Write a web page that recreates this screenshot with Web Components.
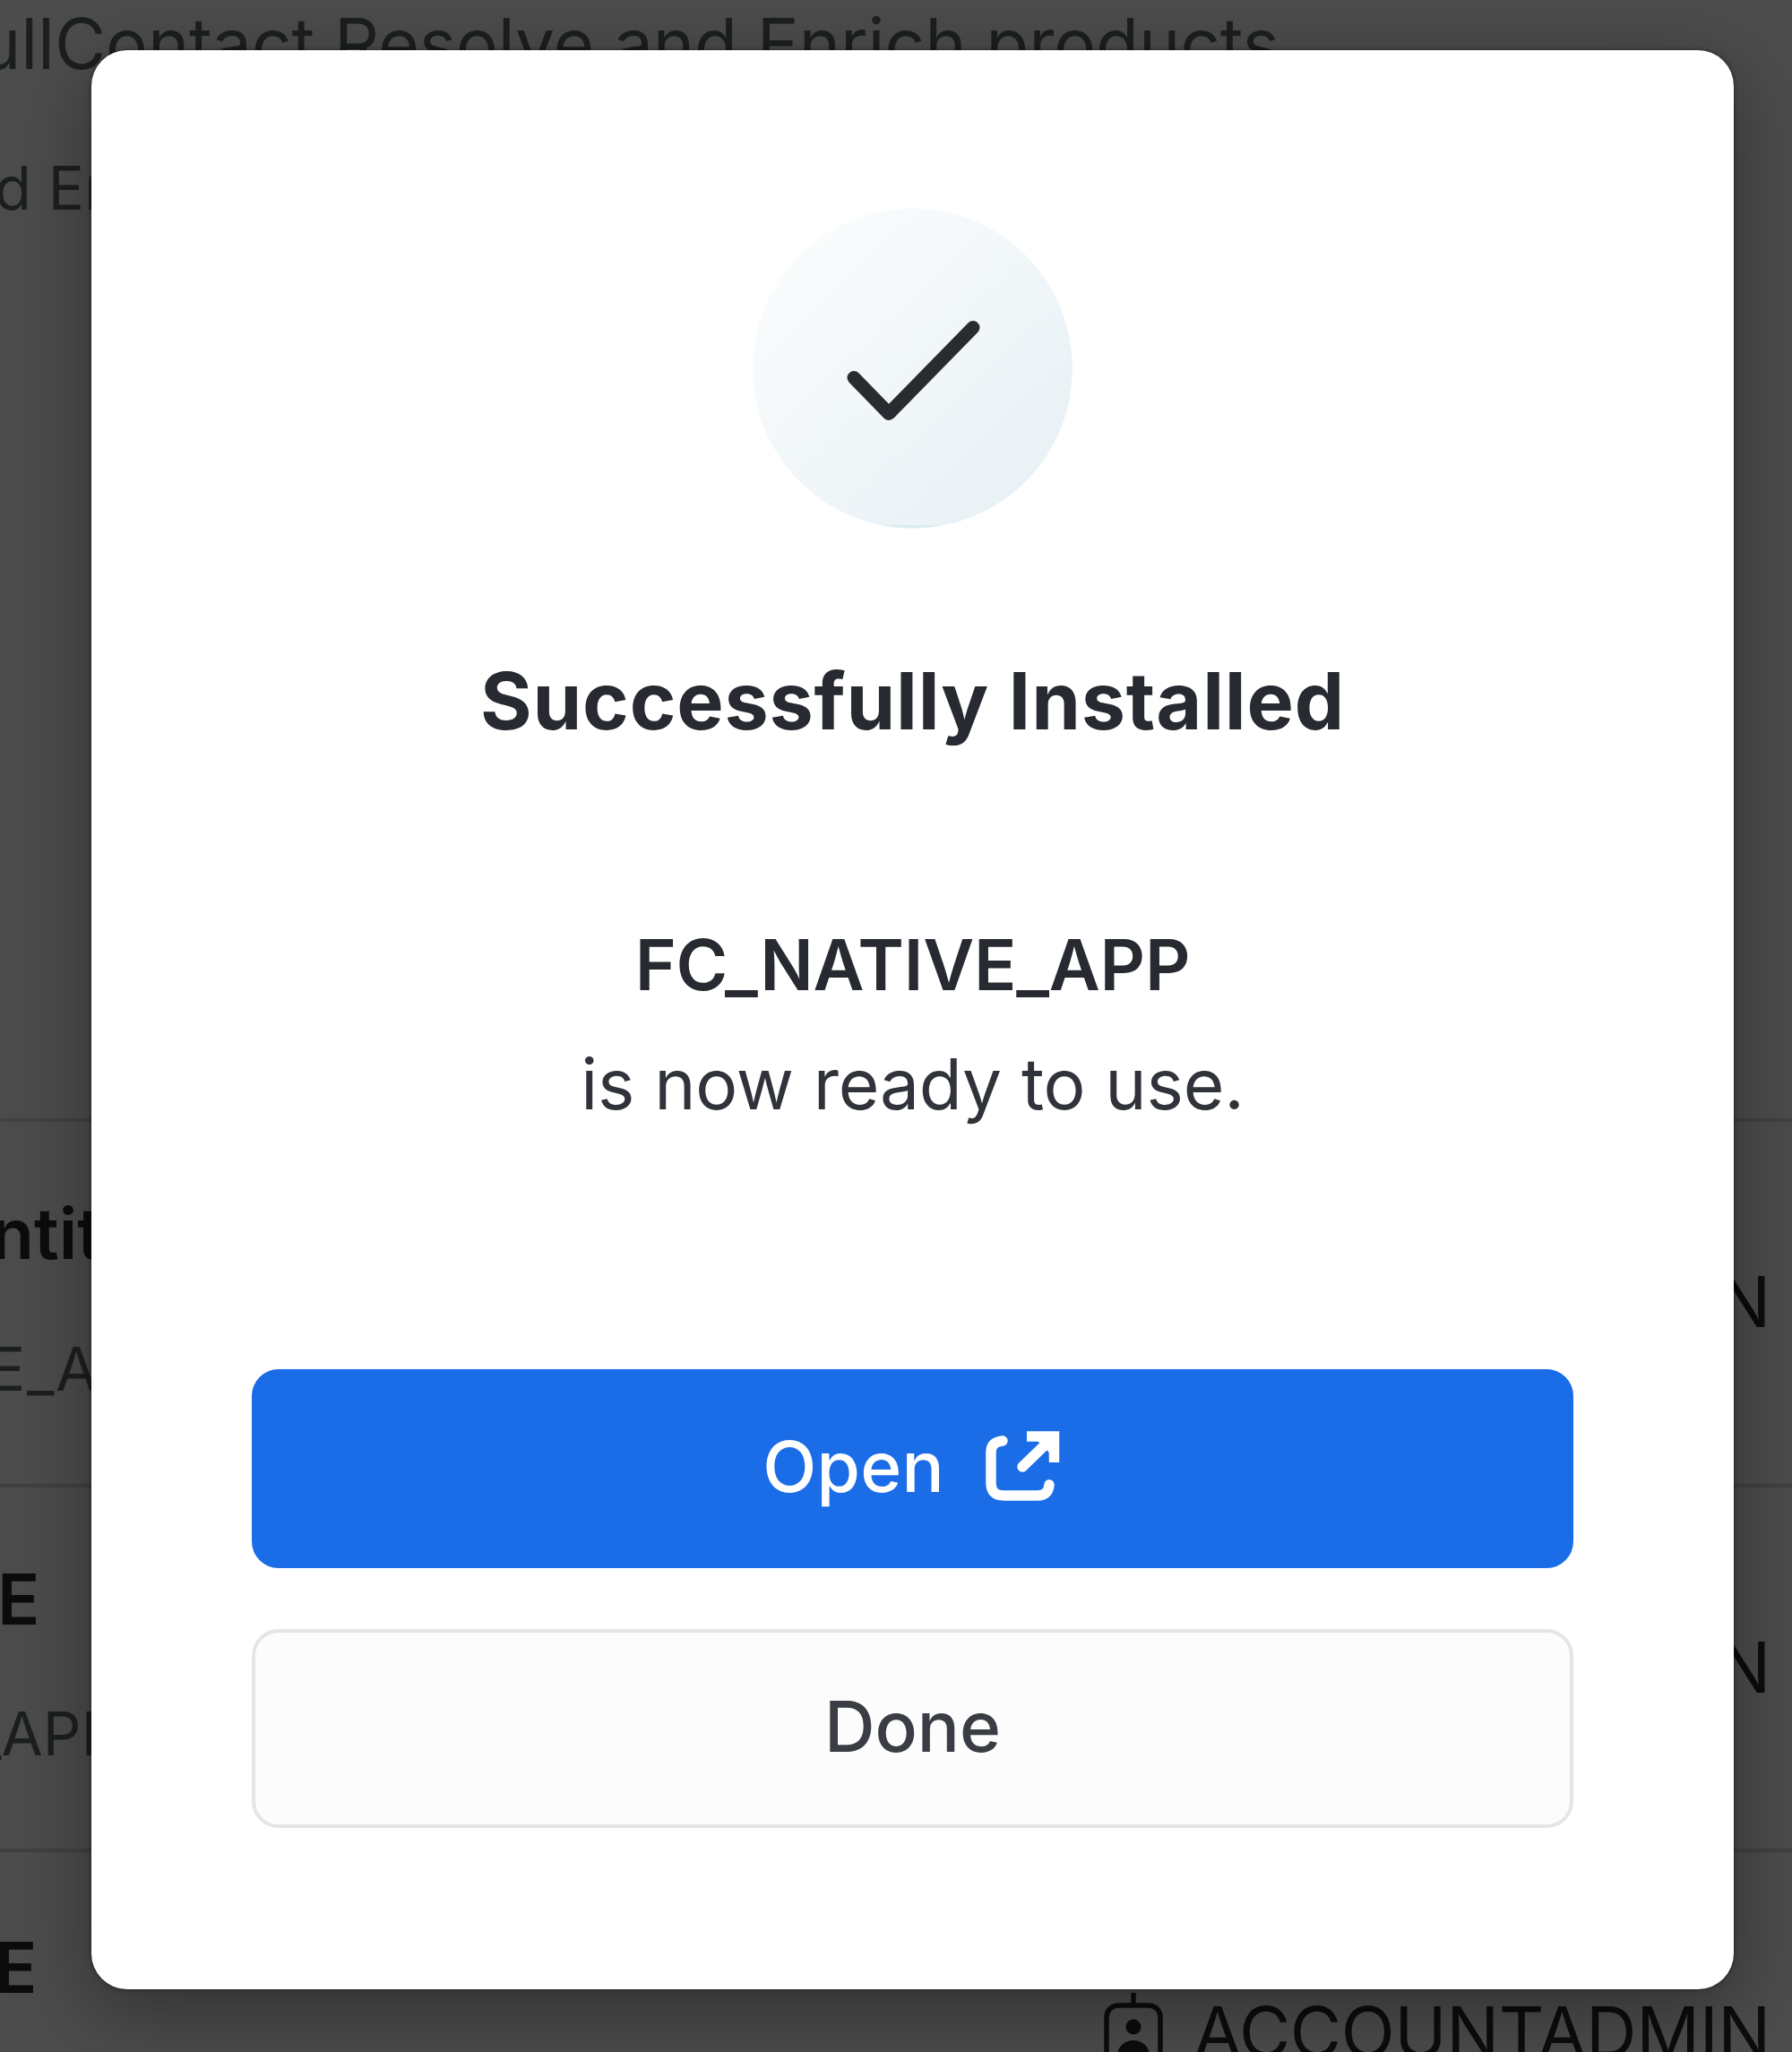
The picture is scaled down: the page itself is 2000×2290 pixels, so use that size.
<!DOCTYPE html>
<html lang="en">
<head>
<meta charset="utf-8">
<title>Successfully Installed</title>
<style>
html,body{margin:0;padding:0}
body{width:2000px;height:2290px;overflow:hidden;position:relative;background:#4c4c4c;font-family:Inter,"Liberation Sans",sans-serif;color:#272a30}
install-dialog{position:absolute;left:102px;top:56px}
</style>
</head>
<body>
<listing-page>
  <span slot="heading">ullContact Resolve and Enrich products</span>
  <span slot="detail">d En</span>
  <app-row style="--top:84px;--start:-10px;--substart:-12px;--subgap:66px;--subspace:1.7px"><span slot="name">ntit</span><span slot="sub">E_A</span><span slot="role">N</span></app-row>
  <app-row style="--top:84px;--start:-3px;--substart:-29px;--subgap:65px"><span slot="name">E</span><span slot="sub">_APP</span><span slot="role">N</span></app-row>
  <app-row style="--top:88px;--start:-6px" badge><span slot="name">E</span><span slot="role">ACCOUNTADMIN</span></app-row>
</listing-page>
<install-dialog>
  <check-badge slot="icon"></check-badge>
  <span slot="title">Successfully Installed</span>
  <span slot="app">FC_NATIVE_APP</span>
  <span slot="message">is now ready to use.</span>
  <action-button primary slot="actions">Open<open-icon slot="icon"></open-icon></action-button>
  <action-button slot="actions">Done</action-button>
</install-dialog>
<script>
const define = (name, html) => customElements.define(name, class extends HTMLElement {
  constructor() {
    super();
    this.attachShadow({ mode: 'open' }).innerHTML = html;
  }
});

define('listing-page', `
<style>
:host{display:flex;flex-direction:column;width:2000px;height:2290px;overflow:hidden;color:#1c1f20}
header{height:1248px;flex:none;white-space:nowrap}
.heading{padding-top:4px;margin-left:-23px;font-size:78.4px;line-height:90px;letter-spacing:-.13px}
.detail{margin:76px 0 0 -6px;font-size:67px;line-height:80px}
</style>
<header><div class="heading"><slot name="heading"></slot></div><div class="detail"><slot name="detail"></slot></div></header>
<slot></slot>`);

define('app-row', `
<style>
:host{display:flex;justify-content:space-between;flex:none;height:407.5px;box-sizing:border-box;border-top:4px solid #404142;white-space:nowrap}
.left{padding-top:calc(var(--top) - 4px)}
.name{margin-left:var(--start);font-size:78.4px;font-weight:600;line-height:90px;color:#0a0c0e}
.sub{margin:var(--subgap,66px) 0 0 var(--substart,0);font-size:67px;line-height:80px;letter-spacing:var(--subspace,0)}
.role{display:flex;align-items:flex-start;gap:33px;padding:156px 24px 0 0;font-size:78.4px;line-height:90px;letter-spacing:-.4px;color:#0a0c0e}
svg{display:none;width:68px;height:100px;margin-top:-1px}
:host([badge]) svg{display:block}
</style>
<div class="left"><div class="name"><slot name="name"></slot></div><div class="sub"><slot name="sub"></slot></div></div>
<div class="role"><svg viewBox="0 0 68 100" fill="none" stroke="#0a0c0e" stroke-width="5.5"><path d="M34 2V17"/><rect x="4" y="16" width="60" height="78" rx="13"/><g fill="#0a0c0e" stroke="none"><circle cx="34" cy="40" r="8.5"/><path d="M16 76V72a18 17 0 0 1 36 0V76Z"/></g></svg><slot name="role"></slot></div>`);

define('install-dialog', `
<style>
:host{display:flex;flex-direction:column;align-items:center;box-sizing:border-box;width:1833px;height:2164px;padding:175px 179px 0;background:#fff;border-radius:40px;box-shadow:0 24px 90px rgba(0,0,0,.36),0 0 5px rgba(0,0,0,.5);white-space:nowrap}
.title{margin-top:136px;font-size:88px;line-height:112px;font-weight:700;letter-spacing:.8px}
.app{margin-top:172px;font-size:78.4px;line-height:133px;font-weight:600;letter-spacing:-.25px}
.message{font-size:78.4px;line-height:133px;letter-spacing:-.16px;color:#303339}
.actions{align-self:stretch;display:flex;flex-direction:column;gap:68px;margin-top:252px}
</style>
<slot name="icon"></slot>
<div class="title"><slot name="title"></slot></div>
<div class="app"><slot name="app"></slot></div>
<div class="message"><slot name="message"></slot></div>
<div class="actions"><slot name="actions"></slot></div>`);

define('check-badge', `
<style>:host{display:block;width:358px;height:359px}svg{display:block}</style>
<svg width="358" height="359" viewBox="0 0 358 359">
<defs><linearGradient id="g" x1=".12" y1=".1" x2=".88" y2=".9"><stop offset="0" stop-color="#fafcfd"/><stop offset="1" stop-color="#e8f1f5"/></linearGradient><clipPath id="c"><circle cx="178.500" cy="180" r="178.500"/></clipPath></defs>
<g clip-path="url(#c)"><rect width="358" height="359" fill="url(#g)"/><rect y="355" width="358" height="4" fill="#dbebf0"/></g>
<path d="M113 190.500L152 230.500L246 134.500" fill="none" stroke="#282c31" stroke-width="15" stroke-linecap="round" stroke-linejoin="round"/>
</svg>`);

define('action-button', `
<style>
:host{display:flex;align-items:center;justify-content:center;gap:43px;height:222px;box-sizing:border-box;padding-bottom:5px;border:4px solid #e3e5e6;border-radius:30px;background:#fcfcfc;color:#3a3d43;font-size:78.4px;font-weight:500;line-height:90px}
:host([primary]){gap:46px;border-color:#1a6ce7;background:#1a6ce7;color:#fff;letter-spacing:.2px}
</style>
<slot></slot><slot name="icon"></slot>`);

define('open-icon', `
<style>:host{display:block;width:86px;height:79px}svg{display:block}</style>
<svg width="86" height="79" viewBox="0 0 86 79" fill="none" stroke="#fff" stroke-width="11.500" stroke-linecap="round">
<path d="M19 11C10 12 6 16 6 24V58Q6 72 20 72H58Q70 72 71 60"/>
<path d="M41 40L73 9"/><path d="M46 6H76.500V35" stroke-linecap="butt"/><path d="M55 8H77V30Z" fill="#fff" stroke="none"/>
</svg>`);
</script>
</body>
</html>
